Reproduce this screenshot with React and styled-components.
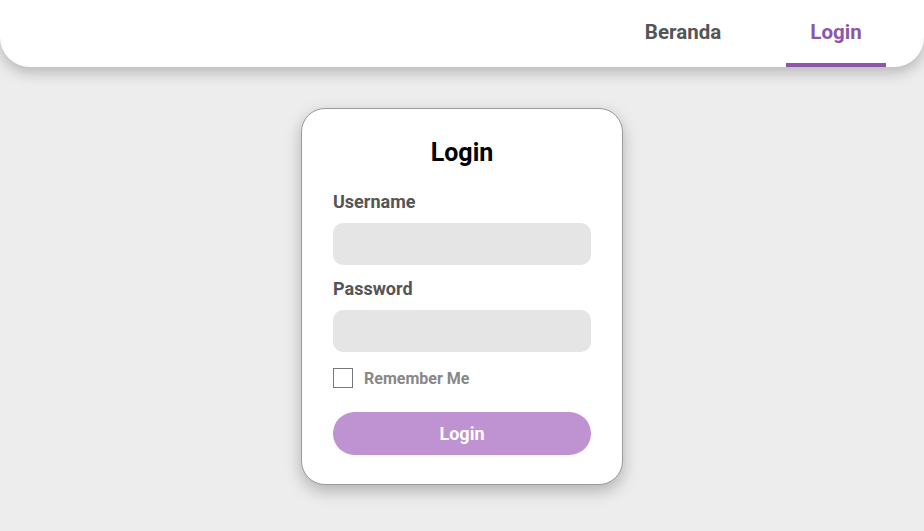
import React, { useState } from 'react'
import styled, { createGlobalStyle } from 'styled-components'

const GlobalStyle = createGlobalStyle`
  * { box-sizing: border-box; }
  body {
    margin: 0;
    background: #ededed;
    font-family: Roboto, "Liberation Sans", sans-serif;
  }
`

const Page = styled.div`
  min-height: 531px;
  display: flex;
  flex-direction: column;
  align-items: center;
`

const Header = styled.header`
  width: 100%;
  height: 67px;
  background: #fff;
  border-radius: 0 0 30px 30px;
  box-shadow: 0 6px 14px rgba(0, 0, 0, 0.22);
  display: flex;
  justify-content: flex-end;
  align-items: stretch;
  padding-right: 38px;
  gap: 53px;
`

const NavItem = styled.a`
  width: 100px;
  display: flex;
  align-items: center;
  justify-content: center;
  font-size: 20.5px;
  font-weight: 700;
  color: ${(p) => (p.$active ? '#8d56a8' : '#555')};
  border-bottom: 4px solid ${(p) => (p.$active ? '#8d56a8' : 'transparent')};
  text-decoration: none;
  cursor: pointer;
`

const Card = styled.div`
  margin-top: 41px;
  width: 322px;
  background: #fff;
  border: 1px solid #9a9a9a;
  border-radius: 24px;
  box-shadow: 0 6px 16px rgba(0, 0, 0, 0.25);
  padding: 29px 31px 29px;
  display: flex;
  flex-direction: column;
`

const Title = styled.h1`
  margin: 0 0 23px;
  text-align: center;
  font-size: 25px;
  font-weight: 700;
  color: #000;
  line-height: 30px;
`

const Label = styled.label`
  font-size: 18px;
  font-weight: 700;
  color: #555;
  line-height: 22px;
  margin-bottom: 10px;
`

const Input = styled.input`
  height: 42px;
  border: none;
  border-radius: 10px;
  background: #e5e5e5;
  padding: 0 12px;
  font-size: 16px;
  margin-bottom: 13px;
  outline: none;
`

const CheckRow = styled.label`
  display: flex;
  align-items: center;
  gap: 11px;
  margin: 3px 0 24px;
  font-size: 16px;
  font-weight: 700;
  color: #888;
  cursor: pointer;
`

const Box = styled.span`
  width: 20px;
  height: 20px;
  border: 1px solid #777;
  background: #fff;
`

const Button = styled.button`
  height: 43px;
  border: none;
  border-radius: 22px;
  background: #bf92d2;
  color: #fff;
  font-family: inherit;
  font-size: 18px;
  font-weight: 700;
  cursor: pointer;
`

const App = () => {
  const [username, setUsername] = useState('')
  const [password, setPassword] = useState('')

  return (
    <Page>
      <GlobalStyle />
      <Header>
        <NavItem>Beranda</NavItem>
        <NavItem $active>Login</NavItem>
      </Header>
      <Card>
        <Title>Login</Title>
        <Label>Username</Label>
        <Input value={username} onChange={(e) => setUsername(e.target.value)} />
        <Label>Password</Label>
        <Input type="password" value={password} onChange={(e) => setPassword(e.target.value)} />
        <CheckRow>
          <Box />
          Remember Me
        </CheckRow>
        <Button>Login</Button>
      </Card>
    </Page>
  )
}

export default App
